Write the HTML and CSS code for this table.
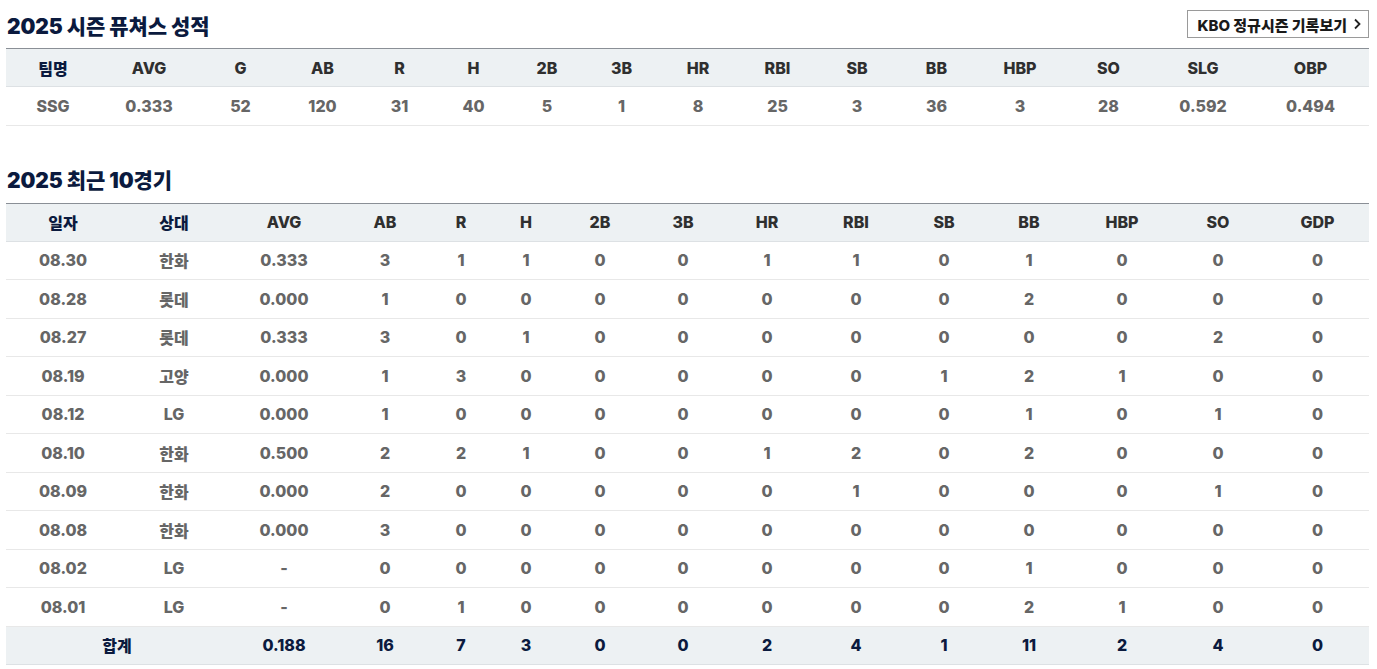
FILE: index.html
```html
<!DOCTYPE html>
<html lang="ko">
<head>
<meta charset="utf-8">
<link rel="stylesheet" href="styles.css">
</head>
<body>
<div class="page">
  <section class="sec sec1">
    <div class="title-row">
      <h2 class="title">2025 시즌 퓨쳐스 성적</h2>
      <a class="kbo-btn" href="#">KBO 정규시즌 기록보기 <svg class="chev" width="7" height="12" viewBox="0 0 7 12"><path d="M1 1.5 L5.5 6 L1 10.5" fill="none" stroke="#222" stroke-width="1.8"/></svg></a>
    </div>
    <table class="stat">
      <colgroup>
        <col class="w94"><col class="w98"><col class="w85"><col class="w79"><col class="w75"><col class="w73"><col class="w74"><col class="w75"><col class="w78"><col class="w81"><col class="w78"><col class="w81"><col class="w86"><col class="w91"><col class="w98"><col class="w117">
      </colgroup>
      <thead>
        <tr><th class="ko">팀명</th><th>AVG</th><th>G</th><th>AB</th><th>R</th><th>H</th><th>2B</th><th>3B</th><th>HR</th><th>RBI</th><th>SB</th><th>BB</th><th>HBP</th><th>SO</th><th>SLG</th><th>OBP</th></tr>
      </thead>
      <tbody>
        <tr><td>SSG</td><td>0.333</td><td>52</td><td>120</td><td>31</td><td>40</td><td>5</td><td>1</td><td>8</td><td>25</td><td>3</td><td>36</td><td>3</td><td>28</td><td>0.592</td><td>0.494</td></tr>
      </tbody>
    </table>
  </section>

  <section class="sec sec2">
    <div class="title-row2">
      <h2 class="title">2025 최근 10경기</h2>
    </div>
    <table class="stat">
      <colgroup>
        <col class="v114"><col class="v108"><col class="v112"><col class="v90"><col class="v62"><col class="v68"><col class="v80"><col class="v86"><col class="v82"><col class="v96"><col class="v80"><col class="v90"><col class="v96"><col class="v96"><col class="v103">
      </colgroup>
      <thead>
        <tr><th class="ko">일자</th><th class="ko">상대</th><th>AVG</th><th>AB</th><th>R</th><th>H</th><th>2B</th><th>3B</th><th>HR</th><th>RBI</th><th>SB</th><th>BB</th><th>HBP</th><th>SO</th><th>GDP</th></tr>
      </thead>
      <tbody>
        <tr><td>08.30</td><td>한화</td><td>0.333</td><td>3</td><td>1</td><td>1</td><td>0</td><td>0</td><td>1</td><td>1</td><td>0</td><td>1</td><td>0</td><td>0</td><td>0</td></tr>
        <tr><td>08.28</td><td>롯데</td><td>0.000</td><td>1</td><td>0</td><td>0</td><td>0</td><td>0</td><td>0</td><td>0</td><td>0</td><td>2</td><td>0</td><td>0</td><td>0</td></tr>
        <tr><td>08.27</td><td>롯데</td><td>0.333</td><td>3</td><td>0</td><td>1</td><td>0</td><td>0</td><td>0</td><td>0</td><td>0</td><td>0</td><td>0</td><td>2</td><td>0</td></tr>
        <tr><td>08.19</td><td>고양</td><td>0.000</td><td>1</td><td>3</td><td>0</td><td>0</td><td>0</td><td>0</td><td>0</td><td>1</td><td>2</td><td>1</td><td>0</td><td>0</td></tr>
        <tr><td>08.12</td><td>LG</td><td>0.000</td><td>1</td><td>0</td><td>0</td><td>0</td><td>0</td><td>0</td><td>0</td><td>0</td><td>1</td><td>0</td><td>1</td><td>0</td></tr>
        <tr><td>08.10</td><td>한화</td><td>0.500</td><td>2</td><td>2</td><td>1</td><td>0</td><td>0</td><td>1</td><td>2</td><td>0</td><td>2</td><td>0</td><td>0</td><td>0</td></tr>
        <tr><td>08.09</td><td>한화</td><td>0.000</td><td>2</td><td>0</td><td>0</td><td>0</td><td>0</td><td>0</td><td>1</td><td>0</td><td>0</td><td>0</td><td>1</td><td>0</td></tr>
        <tr><td>08.08</td><td>한화</td><td>0.000</td><td>3</td><td>0</td><td>0</td><td>0</td><td>0</td><td>0</td><td>0</td><td>0</td><td>0</td><td>0</td><td>0</td><td>0</td></tr>
        <tr><td>08.02</td><td>LG</td><td>-</td><td>0</td><td>0</td><td>0</td><td>0</td><td>0</td><td>0</td><td>0</td><td>0</td><td>1</td><td>0</td><td>0</td><td>0</td></tr>
        <tr><td>08.01</td><td>LG</td><td>-</td><td>0</td><td>1</td><td>0</td><td>0</td><td>0</td><td>0</td><td>0</td><td>0</td><td>2</td><td>1</td><td>0</td><td>0</td></tr>
      </tbody>
      <tfoot>
        <tr><td colspan="2">합계</td><td>0.188</td><td>16</td><td>7</td><td>3</td><td>0</td><td>0</td><td>2</td><td>4</td><td>1</td><td>11</td><td>2</td><td>4</td><td>0</td></tr>
      </tfoot>
    </table>
  </section>
</div>
</body>
</html>
```

FILE: styles.css
```css
html, body {
  margin: 0;
  padding: 0;
  background: #fff;
}
body {
  font-family: Inter, "Noto Sans CJK KR", sans-serif;
  font-weight: 700;
  color: #333;
}
.page {
  width: 1363px;
  padding: 0 0 0 6px;
}
.title-row {
  display: flex;
  justify-content: space-between;
  align-items: flex-start;
  padding-top: 10px;
  height: 38px;
}
.title {
  margin: 0;
  font-size: 21px;
  font-weight: 900;
  line-height: 28px;
  color: #0b1a3e;
  padding-left: 1px;
  letter-spacing: -0.1px;
}
.title-row .title {
  margin-top: 3px;
}
.kbo-btn {
  display: flex;
  align-items: center;
  gap: 7px;
  box-sizing: border-box;
  height: 28px;
  padding: 0 7px 0 9px;
  border: 1px solid #9a9a9a;
  font-size: 15px;
  font-weight: 800;
  color: #1a1a1a;
  text-decoration: none;
  letter-spacing: 0;
}
.chev {
  display: block;
}
.sec2 {
  margin-top: 41px;
}
.title-row2 {
  padding-bottom: 8px;
}
.stat {
  width: 1363px;
  border-collapse: collapse;
  table-layout: fixed;
  border-top: 1px solid #8a8f96;
}
.stat th, .stat td {
  text-align: center;
  padding: 0;
  font-size: 16px;
  white-space: nowrap;
}
.stat th {
  height: 37px;
  background: #edf1f3;
  color: #2f2f2f;
  font-weight: 800;
  border-bottom: 1px solid #dde1e4;
}
.stat th.ko {
  color: #0b1a3e;
}
.stat tbody td {
  height: 37.5px;
  color: #666;
  font-weight: 800;
  border-bottom: 1px solid #e8e8e8;
}
.stat tfoot td {
  height: 37.5px;
  background: #edf1f3;
  color: #0b1a3e;
  font-weight: 800;
  border-bottom: 1px solid #dde1e4;
}
.w94 { width: 94px; }
.w98 { width: 98px; }
.w85 { width: 85px; }
.w79 { width: 79px; }
.w75 { width: 75px; }
.w73 { width: 73px; }
.w74 { width: 74px; }
.w78 { width: 78px; }
.w81 { width: 81px; }
.w86 { width: 86px; }
.w91 { width: 91px; }
.w117 { width: 117px; }
.v114 { width: 114px; }
.v108 { width: 108px; }
.v112 { width: 112px; }
.v90 { width: 90px; }
.v62 { width: 62px; }
.v68 { width: 68px; }
.v80 { width: 80px; }
.v86 { width: 86px; }
.v82 { width: 82px; }
.v96 { width: 96px; }
.v103 { width: 103px; }
```
